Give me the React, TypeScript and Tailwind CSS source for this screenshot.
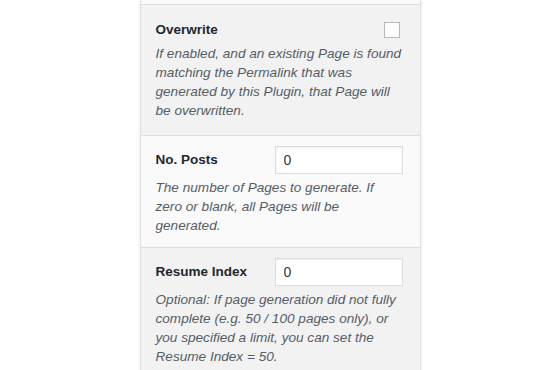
import React from 'react';

const font = { fontFamily: '"Liberation Sans", Arial, sans-serif' };

const Description: React.FC<{ lines: string[] }> = ({ lines }) => (
  <p className="mt-[4px] text-[13.6px] leading-[19px] italic text-[#555d66]">
    {lines.map((line, i) => (
      <span key={i} className="block whitespace-nowrap">
        {line}
      </span>
    ))}
  </p>
);

const NumberField: React.FC<{ label: string; value: string }> = ({ label, value }) => (
  <div className="flex items-center">
    <label className="w-[119px] text-[13.5px] font-bold text-[#23282d]">{label}</label>
    <input
      type="text"
      defaultValue={value}
      className="h-[28px] w-[128px] border border-[#dddddd] bg-white px-[8px] text-[14px] text-[#32373c] shadow-[inset_0_1px_2px_rgba(0,0,0,0.07)] outline-none"
    />
  </div>
);

export default function App() {
  return (
    <div className="min-h-[370px] w-full bg-white" style={font}>
      <div className="mx-auto w-[281px] border-x border-[#e1e1e1] shadow-[0_0_4px_rgba(0,0,0,0.08)]">
        <div className="h-[4px] bg-[#fafafa]" />

        <section className="border-t border-[#dedede] bg-[#f2f2f2] px-[15px] pt-[15px] pb-[15px]">
          <div className="flex items-center justify-between pr-[5px]">
            <span className="text-[13.5px] font-bold text-[#23282d]">Overwrite</span>
            <span className="block h-[16px] w-[16px] border border-[#b4b9be] bg-white" />
          </div>
          <Description
            lines={[
              'If enabled, and an existing Page is found',
              'matching the Permalink that was',
              'generated by this Plugin, that Page will',
              'be overwritten.',
            ]}
          />
        </section>

        <section className="border-t border-[#dedede] bg-[#fafafa] px-[15px] pt-[10px] pb-[12px]">
          <NumberField label="No. Posts" value="0" />
          <Description
            lines={[
              'The number of Pages to generate. If',
              'zero or blank, all Pages will be',
              'generated.',
            ]}
          />
        </section>

        <section className="border-t border-[#dedede] bg-[#f2f2f2] px-[15px] pt-[10px] pb-[14px]">
          <NumberField label="Resume Index" value="0" />
          <Description
            lines={[
              'Optional: If page generation did not fully',
              'complete (e.g. 50 / 100 pages only), or',
              'you specified a limit, you can set the',
              'Resume Index = 50.',
            ]}
          />
        </section>
      </div>
    </div>
  );
}
